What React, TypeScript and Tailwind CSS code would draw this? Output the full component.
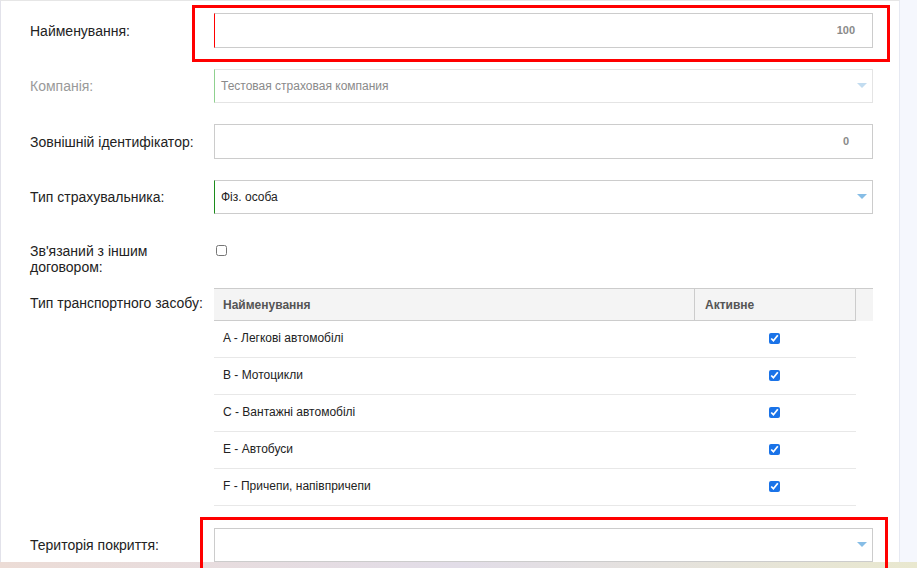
import React from "react";

const vehicleTypes = [
  "A - Легкові автомобілі",
  "B - Мотоцикли",
  "C - Вантажні автомобілі",
  "E - Автобуси",
  "F - Причепи, напівпричепи",
];

const Arrow = ({ light }: { light?: boolean }) => (
  <svg width="10" height="6" viewBox="0 0 10 6" className="absolute right-[5px] top-1/2 -translate-y-1/2">
    <polygon points="0,0 10,0 5,5" fill={light ? "#c2dcf0" : "#86bde6"} />
  </svg>
);

const Label = ({ children, muted }: { children: React.ReactNode; muted?: boolean }) => (
  <div className={`w-[184px] shrink-0 pr-[4px] text-[14px] leading-4 ${muted ? "text-[#9a9a9a]" : "text-[#222]"}`}>
    {children}
  </div>
);

const App: React.FC = () => {
  return (
    <div className="relative flex w-[917px] h-[568px] overflow-hidden bg-[#f5f7fd] font-['Liberation_Sans',Arial,sans-serif]">
      {/* ===== MAIN PANEL ===== */}
      <div className="flex flex-col w-[900px] h-[562px] bg-white border-l border-t border-r border-l-[#e2e2ea] border-t-[#e6e6e6] border-r-[#e6e9f2] pl-[29px] pr-[26px]">
        {/* Найменування */}
        <div className="flex items-center mt-[12px]">
          <Label>Найменування:</Label>
          <div className="flex flex-1 items-center justify-end h-[35px] border border-[#cccccc] border-l-[#ff0000] pr-[17px]">
            <span className="text-[11px] font-bold text-[#8a8a8a]">100</span>
          </div>
        </div>

        {/* Компанія */}
        <div className="flex items-center mt-[21px]">
          <Label muted>Компанія:</Label>
          <div className="relative flex flex-1 items-center h-[34px] border border-[#e4e4e4] border-l-[#8fd18f] pl-[6px]">
            <span className="text-[12px] text-[#8a8a8a]">Тестовая страховая компания</span>
            <Arrow light />
          </div>
        </div>

        {/* Зовнішній ідентифікатор */}
        <div className="flex items-center mt-[21px]">
          <Label>Зовнішній ідентифікатор:</Label>
          <div className="flex flex-1 items-center justify-end h-[35px] border border-[#cccccc] pr-[23px]">
            <span className="text-[11px] font-bold text-[#8a8a8a]">0</span>
          </div>
        </div>

        {/* Тип страхувальника */}
        <div className="flex items-center mt-[21px]">
          <Label>Тип страхувальника:</Label>
          <div className="relative flex flex-1 items-center h-[34px] border border-[#cccccc] border-l-[#1c8c1c] pl-[6px]">
            <span className="text-[12px] text-[#222]">Фіз. особа</span>
            <Arrow />
          </div>
        </div>

        {/* Зв'язаний з іншим договором */}
        <div className="flex items-start mt-[29px]">
          <Label>Зв'язаний з іншим договором:</Label>
          <input type="checkbox" className="mt-[2px] ml-[2px] w-[11px] h-[11px]" />
        </div>

        {/* Тип транспортного засобу */}
        <div className="flex items-start mt-[13px]">
          <div className="pt-[7px]">
            <Label>Тип транспортного засобу:</Label>
          </div>
          <div className="flex-1">
            <div className="flex h-[33px] bg-[#f4f4f4] border-t border-[#cccccc] text-[12px] font-bold text-[#555]">
              <div className="flex items-center flex-1 pl-[9px] border-b border-[#cccccc]">Найменування</div>
              <div className="flex items-center w-[162px] pl-[10px] border-l border-r border-b border-[#cccccc]">Активне</div>
              <div className="w-[17px]" />
            </div>
            {vehicleTypes.map((name) => (
              <div key={name} className="flex h-[37px] mr-[17px] border-b border-[#e8e8e8] text-[12px] text-[#222]">
                <div className="flex items-center flex-1 pl-[9px] pb-[2px]">{name}</div>
                <div className="flex items-center justify-center w-[163px] pb-[2px]">
                  <input type="checkbox" defaultChecked className="w-[11px] h-[11px] accent-[#1a73e8]" />
                </div>
              </div>
            ))}
          </div>
        </div>

        {/* Територія покриття */}
        <div className="flex items-center mt-[22px]">
          <Label>Територія покриття:</Label>
          <div className="relative flex flex-1 items-center h-[34px] border border-[#cccccc]">
            <Arrow />
          </div>
        </div>
      </div>

      {/* ===== BOTTOM STRIP ===== */}
      <div className="absolute left-0 right-0 bottom-0 h-[6px] bg-gradient-to-r from-[#ecdcd6] via-[#e2dde8] to-[#e9e8cf]" />

      {/* ===== HIGHLIGHTS ===== */}
      <div className="absolute left-[192px] top-[5px] w-[698px] h-[57px] border-[3px] border-[#ff0000]" />
      <div className="absolute left-[200px] top-[517px] w-[688px] h-[60px] border-[3px] border-[#ff0000]" />
    </div>
  );
};

export default App;
